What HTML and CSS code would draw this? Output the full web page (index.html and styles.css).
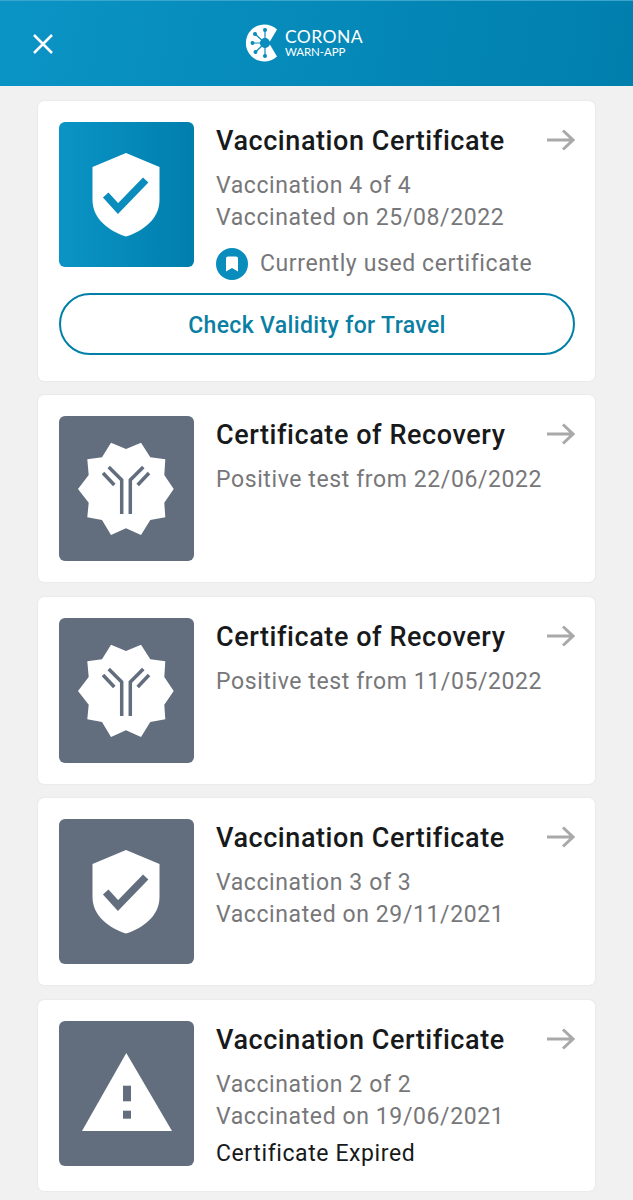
FILE: index.html
```html
<!DOCTYPE html>
<html>
<head>
    <title>Corona-Warn-App</title>
    <link rel="stylesheet" href="styles.css">
</head>
<body>
    <svg class="defs" width="0" height="0">
        <defs>
            <symbol id="arrow" viewBox="0 0 28 22">
                <path d="M0 11H26M16 1.500L26 11L16 20.500" fill="none" stroke="#a9a9a9" stroke-width="3"/>
            </symbol>
            <symbol id="shield" viewBox="0 0 135 145">
                <path fill="#fff" d="M67 31L100.500 45V78C100.500 97 84 109 67 114.500C50 109 33.500 97 33.500 78V45Z"/>
                <path fill="none" stroke="currentColor" stroke-width="7.500" d="M46.700 73L59 86.500L86.700 58"/>
            </symbol>
            <symbol id="recovery" viewBox="0 0 135 145">
                <path fill="#fff" d="M67 33L82 26.700L91.300 41.300L106.300 43.300L105.300 59L114.700 73L105.300 86.700L106.300 101.300L91.300 104L82 119L67 112.300L52 119L43 104L28.300 101.300L29.700 86.700L19 73L29.700 59L28.300 43.300L43 41.300L52 26.700Z"/>
                <path fill="none" stroke="currentColor" stroke-width="3.500" d="M62.700 98V64L49.700 51M71.300 98V64L84.300 51M55.300 69L44 57M78.700 69L90 57"/>
            </symbol>
            <symbol id="warning" viewBox="0 0 135 145">
                <path fill="#fff" d="M67.300 32L113 110H23Z"/>
                <rect x="64" y="64.700" width="8" height="15.600" fill="currentColor"/>
                <rect x="64" y="89.700" width="8" height="8" fill="currentColor"/>
            </symbol>
        </defs>
    </svg>

    <header class="topbar">
        <svg class="close" viewBox="0 0 22 22" width="22" height="22">
            <path d="M2 2L20 20M20 2L2 20" stroke="#fff" stroke-width="2.500" fill="none"/>
        </svg>
        <div class="logo">
            <svg viewBox="0 0 34 40" width="34" height="40">
                <path fill="#fff" d="M32 6.500A18.500 18.500 0 1 0 32 33.500L24 20Z"/>
                <g stroke="#0a8cbc" stroke-width="1.200" fill="#0a8cbc">
                    <path d="M20 20V7M20 20L10 11M20 20H7.500M20 20L10.500 29M20 20V33"/>
                    <circle cx="20" cy="20" r="4.500"/>
                    <circle cx="20" cy="7" r="1.400"/>
                    <circle cx="10" cy="11" r="1.400"/>
                    <circle cx="7.500" cy="20" r="1.400"/>
                    <circle cx="10.500" cy="29" r="1.400"/>
                    <circle cx="20" cy="33" r="1.400"/>
                </g>
            </svg>
            <div class="logo-text">
                <span class="logo-main">CORONA</span>
                <span class="logo-sub">WARN-APP</span>
            </div>
        </div>
    </header>

    <main class="list">
        <section class="card">
            <div class="card-top">
                <div class="tile tile-active">
                    <svg width="135" height="145"><use href="#shield"/></svg>
                </div>
                <div class="info">
                    <h2 class="title">Vaccination Certificate</h2>
                    <p class="line">Vaccination 4 of 4</p>
                    <p class="line">Vaccinated on 25/08/2022</p>
                    <div class="current">
                        <svg class="badge" viewBox="0 0 32 32" width="32" height="32">
                            <circle cx="16" cy="16" r="16" fill="#0a8cbc"/>
                            <path fill="#fff" d="M10 10.500Q10 8.500 12 8.500H20Q22 8.500 22 10.500V23.500L16 20L10 23.500Z"/>
                        </svg>
                        <span class="line">Currently used certificate</span>
                    </div>
                </div>
                <svg class="arrow" width="28" height="22"><use href="#arrow"/></svg>
            </div>
            <button class="validity">Check Validity for Travel</button>
        </section>

        <section class="card">
            <div class="card-top">
                <div class="tile">
                    <svg width="135" height="145"><use href="#recovery"/></svg>
                </div>
                <div class="info">
                    <h2 class="title">Certificate of Recovery</h2>
                    <p class="line">Positive test from 22/06/2022</p>
                </div>
                <svg class="arrow" width="28" height="22"><use href="#arrow"/></svg>
            </div>
        </section>

        <section class="card">
            <div class="card-top">
                <div class="tile">
                    <svg width="135" height="145"><use href="#recovery"/></svg>
                </div>
                <div class="info">
                    <h2 class="title">Certificate of Recovery</h2>
                    <p class="line">Positive test from 11/05/2022</p>
                </div>
                <svg class="arrow" width="28" height="22"><use href="#arrow"/></svg>
            </div>
        </section>

        <section class="card">
            <div class="card-top">
                <div class="tile">
                    <svg width="135" height="145"><use href="#shield"/></svg>
                </div>
                <div class="info">
                    <h2 class="title">Vaccination Certificate</h2>
                    <p class="line">Vaccination 3 of 3</p>
                    <p class="line">Vaccinated on 29/11/2021</p>
                </div>
                <svg class="arrow" width="28" height="22"><use href="#arrow"/></svg>
            </div>
        </section>

        <section class="card">
            <div class="card-top">
                <div class="tile">
                    <svg width="135" height="145"><use href="#warning"/></svg>
                </div>
                <div class="info">
                    <h2 class="title">Vaccination Certificate</h2>
                    <p class="line">Vaccination 2 of 2</p>
                    <p class="line">Vaccinated on 19/06/2021</p>
                    <p class="line line-dark">Certificate Expired</p>
                </div>
                <svg class="arrow" width="28" height="22"><use href="#arrow"/></svg>
            </div>
        </section>
    </main>
</body>
</html>
```

FILE: styles.css
```css
* {
    box-sizing: border-box;
}

html, body {
    height: 1200px;
    overflow: hidden;
}

body {
    margin: 0;
    background-color: #f1f1f1;
    font-family: Roboto, "Liberation Sans", sans-serif;
}

.defs {
    display: block;
    height: 0;
}

.topbar {
    display: flex;
    align-items: center;
    height: 86px;
    padding: 1px 32px 0;
    background: linear-gradient(100deg, #0a94c5, #007fad);
    border-top: 1px solid #3aa6cd;
}

.logo {
    display: flex;
    align-items: center;
    gap: 6px;
    margin: 0 0 3px 191px;
}

.logo-text {
    display: flex;
    flex-direction: column;
    color: #fff;
}

.logo-main {
    font-family: Lato, sans-serif;
    font-size: 17.5px;
    line-height: 18px;
    letter-spacing: 0.4px;
}

.logo-sub {
    font-family: Lato, sans-serif;
    font-size: 11.5px;
    line-height: 12px;
    letter-spacing: -0.1px;
}

.list {
    display: flex;
    flex-direction: column;
    gap: 14.5px;
    padding: 14.5px 38px 0;
}

.card {
    padding: 21px 20px 21px 21px;
    background-color: #fff;
    border-radius: 6px;
    box-shadow: 0 0 2px rgba(0, 0, 0, 0.1);
}

.card-top {
    display: flex;
    align-items: flex-start;
}

.tile {
    flex: none;
    width: 135px;
    height: 145px;
    margin-right: 22px;
    background-color: #626e7e;
    border-radius: 6px;
    color: #626e7e;
}

.tile svg {
    display: block;
}

.tile-active {
    background: linear-gradient(90deg, #0a94c5, #007fad);
    color: #0a8cbc;
}

.info {
    flex: 1;
}

.title {
    margin: 0 0 13px;
    padding-top: 3px;
    font-size: 27px;
    line-height: 32px;
    font-weight: 500;
    letter-spacing: 0.57px;
    color: #17191a;
}

.line {
    margin: 0;
    font-size: 23px;
    line-height: 32px;
    letter-spacing: 0.6px;
    color: #77777a;
}

.line-dark {
    margin-top: 5px;
    color: #17191a;
}

.current {
    display: flex;
    align-items: center;
    gap: 12px;
    margin-top: 14px;
}

.arrow {
    flex: none;
    margin-top: 7px;
}

.validity {
    display: block;
    width: 100%;
    height: 62px;
    margin: 13px 0 5px;
    padding-top: 5px;
    background-color: #fff;
    border: 2px solid #007fa8;
    border-radius: 31px;
    font-family: inherit;
    font-size: 23px;
    font-weight: 500;
    letter-spacing: 0.35px;
    color: #0b7fa3;
}
```
